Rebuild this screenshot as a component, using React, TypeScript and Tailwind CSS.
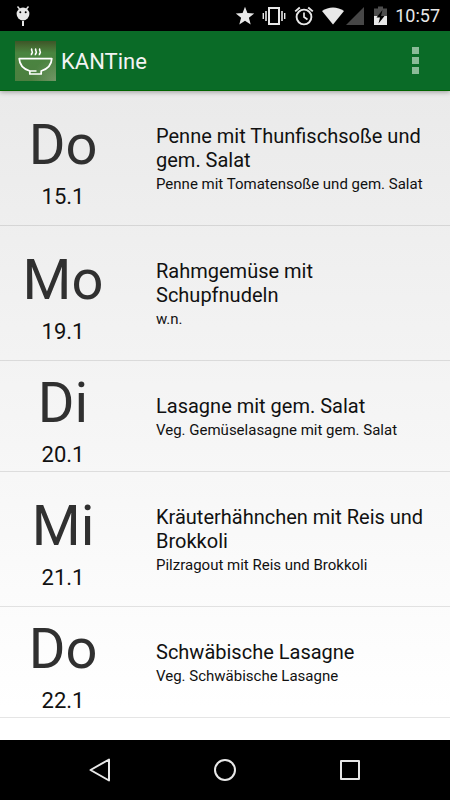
import type { ReactNode } from "react";

type Meal = {
  day: string;
  date: string;
  title: string;
  alternative: string;
};

const meals: Meal[] = [
  {
    day: "Do",
    date: "15.1",
    title: "Penne mit Thunfischsoße und gem. Salat",
    alternative: "Penne mit Tomatensoße und gem. Salat",
  },
  { day: "Mo", date: "19.1", title: "Rahmgemüse mit Schupfnudeln", alternative: "w.n." },
  {
    day: "Di",
    date: "20.1",
    title: "Lasagne mit gem. Salat",
    alternative: "Veg. Gemüselasagne mit gem. Salat",
  },
  {
    day: "Mi",
    date: "21.1",
    title: "Kräuterhähnchen mit Reis und Brokkoli",
    alternative: "Pilzragout mit Reis und Brokkoli",
  },
  {
    day: "Do",
    date: "22.1",
    title: "Schwäbische Lasagne",
    alternative: "Veg. Schwäbische Lasagne",
  },
];

function DebugIcon() {
  return (
    <svg width="14" height="20" viewBox="0 0 14 20" fill="#e8e8e8" aria-hidden="true">
      <path d="M1.5 0.5 3.6 3M12.5 0.5 10.4 3" stroke="#e8e8e8" strokeWidth="1.4" />
      <circle cx="7" cy="8" r="6.4" />
      <path d="M6 15h2v5H6z" />
      <circle cx="4.3" cy="6.3" r="1" fill="#000" />
      <circle cx="9.7" cy="6.3" r="1" fill="#000" />
    </svg>
  );
}

function StarIcon() {
  return (
    <svg width="20" height="20" viewBox="0 0 20 20" fill="#e8e8e8" aria-hidden="true">
      <path d="m10 0.7 2.4 6.4 6.8.4-5.300 4.300 1.800 6.800L10 14.800l-5.700 3.800 1.800-6.800L.8 7.500l6.800-.4z" />
    </svg>
  );
}

function VibrateIcon() {
  return (
    <svg width="24" height="20" viewBox="0 0 24 20" fill="none" stroke="#e8e8e8" aria-hidden="true">
      <rect x="7" y="2" width="10" height="16" strokeWidth="2" />
      <path d="M4 5v10M20 5v10" strokeWidth="1.6" />
      <path d="M1.3 7v6M22.7 7v6" strokeWidth="1.4" />
    </svg>
  );
}

function AlarmIcon() {
  return (
    <svg width="20" height="20" viewBox="0 0 20 20" fill="none" stroke="#e8e8e8" aria-hidden="true">
      <circle cx="10" cy="11" r="7.4" strokeWidth="1.9" />
      <path d="M10 6.5V11l3.5 2.5" strokeWidth="1.7" />
      <path d="M1.2 5.4 5.8 1.5M18.8 5.4 14.2 1.5" strokeWidth="1.9" />
    </svg>
  );
}

function WifiIcon() {
  return (
    <svg width="22" height="20" viewBox="0 0 22 20" fill="#e8e8e8" aria-hidden="true">
      <path d="M11 18.500 0 5C6.500.3 15.500.3 22 5z" />
    </svg>
  );
}

function SignalIcon() {
  return (
    <svg width="18" height="20" viewBox="0 0 18 20" fill="#474747" aria-hidden="true">
      <path d="M18 1v18H0z" />
    </svg>
  );
}

function BatteryIcon() {
  return (
    <svg width="13" height="20" viewBox="0 0 13 20" aria-hidden="true">
      <path d="M4 0.500h5V2.500h4V10H0V2.500h4z" fill="#4d4d4d" />
      <path d="M0 10h13v9H0z" fill="#e8e8e8" />
      <path d="M8.500 4 2.500 11.500h3.500L4.500 17.500l6-7.500H7z" fill="#000" />
    </svg>
  );
}

function StatusBar() {
  return (
    <div className="flex h-[31px] items-center bg-black pr-[10px] pl-4 text-[#e8e8e8]">
      <DebugIcon />
      <div className="ml-auto flex items-center">
        <StarIcon />
        <span className="ml-[7px]">
          <VibrateIcon />
        </span>
        <span className="ml-2">
          <AlarmIcon />
        </span>
        <span className="ml-2">
          <WifiIcon />
        </span>
        <span className="ml-[2px]">
          <SignalIcon />
        </span>
        <span className="ml-[10px]">
          <BatteryIcon />
        </span>
        <time className="ml-2 text-lg leading-6">10:57</time>
      </div>
    </div>
  );
}

function BowlLogo() {
  return (
    <svg width="41" height="40" viewBox="0 0 41 40" fill="none" aria-hidden="true">
      <defs>
        <linearGradient id="grass" x1="0" y1="0" x2="0" y2="1">
          <stop offset="0" stopColor="#3d5527" />
          <stop offset="0.14" stopColor="#456c33" />
          <stop offset="0.3" stopColor="#4a8540" />
          <stop offset="1" stopColor="#4c7f40" />
        </linearGradient>
        <radialGradient id="glow" cx="1" cy="1" r="0.6">
          <stop offset="0" stopColor="#8aa580" stopOpacity="0.6" />
          <stop offset="1" stopColor="#8aa580" stopOpacity="0" />
        </radialGradient>
      </defs>
      <rect width="41" height="40" fill="url(#grass)" />
      <rect width="41" height="40" fill="url(#glow)" />
      <g stroke="#fff" strokeLinejoin="round">
        <path
          d="M14.800 30C8.500 28 4.500 23.500 4.200 17.600h32.600C36.500 23.500 32.500 28 26.200 30v3H14.800v-3h6.700"
          strokeWidth="1.700"
        />
        <path
          d="M17 7.500c-1.600 2 1.200 3 .2 4.400-.7.800-1 1.400-.7 2.400M21 7.500c-1.600 2 1.200 3 .2 4.400-.7.800-1 1.400-.7 2.400M25 7.500c-1.600 2 1.200 3 .2 4.400-.7.800-1 1.400-.7 2.400"
          strokeWidth="1.600"
        />
      </g>
    </svg>
  );
}

function AppBar() {
  return (
    <header className="z-10 flex h-[60px] items-center border-b border-[#006400] bg-[#0a6b27] px-[15px] shadow-[0_1px_5px_rgba(0,0,0,0.35)]">
      <BowlLogo />
      <h1 className="ml-[5px] pt-[2px] text-[22px] leading-7 text-[#f3f3f3]">KANTine</h1>
      <button
        type="button"
        aria-label="Menü"
        className="ml-auto flex h-12 w-10 flex-col items-center justify-center gap-[3px]"
      >
        <span className="size-[7px] bg-[#8bbb98]" />
        <span className="size-[7px] bg-[#8bbb98]" />
        <span className="size-[7px] bg-[#8bbb98]" />
      </button>
    </header>
  );
}

function MealRow({ day, date, title, alternative }: Meal) {
  return (
    <li className="flex items-center border-b border-black/10 pr-5">
      <div className="mr-[30px] w-[126px] shrink-0 pt-[10px] text-center">
        <p className="text-[56px] leading-[64px] text-[#303030]">{day}</p>
        <p className="mt-1 text-[22px] leading-8">{date}</p>
      </div>
      <div className="min-w-0 flex-1 self-start pt-[33px] pb-[29px]">
        <h2 className="text-xl leading-6">{title}</h2>
        <p className="text-[15px] leading-6">{alternative}</p>
      </div>
    </li>
  );
}

function NavButton({ label, children }: { label: string; children: ReactNode }) {
  return (
    <button type="button" aria-label={label} className="flex w-[125px] items-center justify-center">
      <svg
        width="24"
        height="24"
        viewBox="0 0 24 24"
        fill="none"
        stroke="#e8e8e8"
        strokeWidth="2"
        strokeLinejoin="round"
        aria-hidden="true"
      >
        {children}
      </svg>
    </button>
  );
}

function NavBar() {
  return (
    <nav className="flex h-[60px] justify-center bg-black">
      <NavButton label="Zurück">
        <path d="M21 1.500v21L2.500 12z" />
      </NavButton>
      <NavButton label="Startseite">
        <circle cx="12" cy="12" r="10" />
      </NavButton>
      <NavButton label="Letzte Apps">
        <rect x="3" y="3" width="18" height="18" />
      </NavButton>
    </nav>
  );
}

export default function App() {
  return (
    <div className="flex min-h-screen flex-col font-[Roboto,sans-serif] text-[#111]">
      <StatusBar />
      <AppBar />
      <main className="flex-1 bg-linear-to-b from-[#eaeaea] to-white to-95%">
        <ul>
          {meals.map((meal) => (
            <MealRow key={meal.date} {...meal} />
          ))}
        </ul>
      </main>
      <NavBar />
    </div>
  );
}
